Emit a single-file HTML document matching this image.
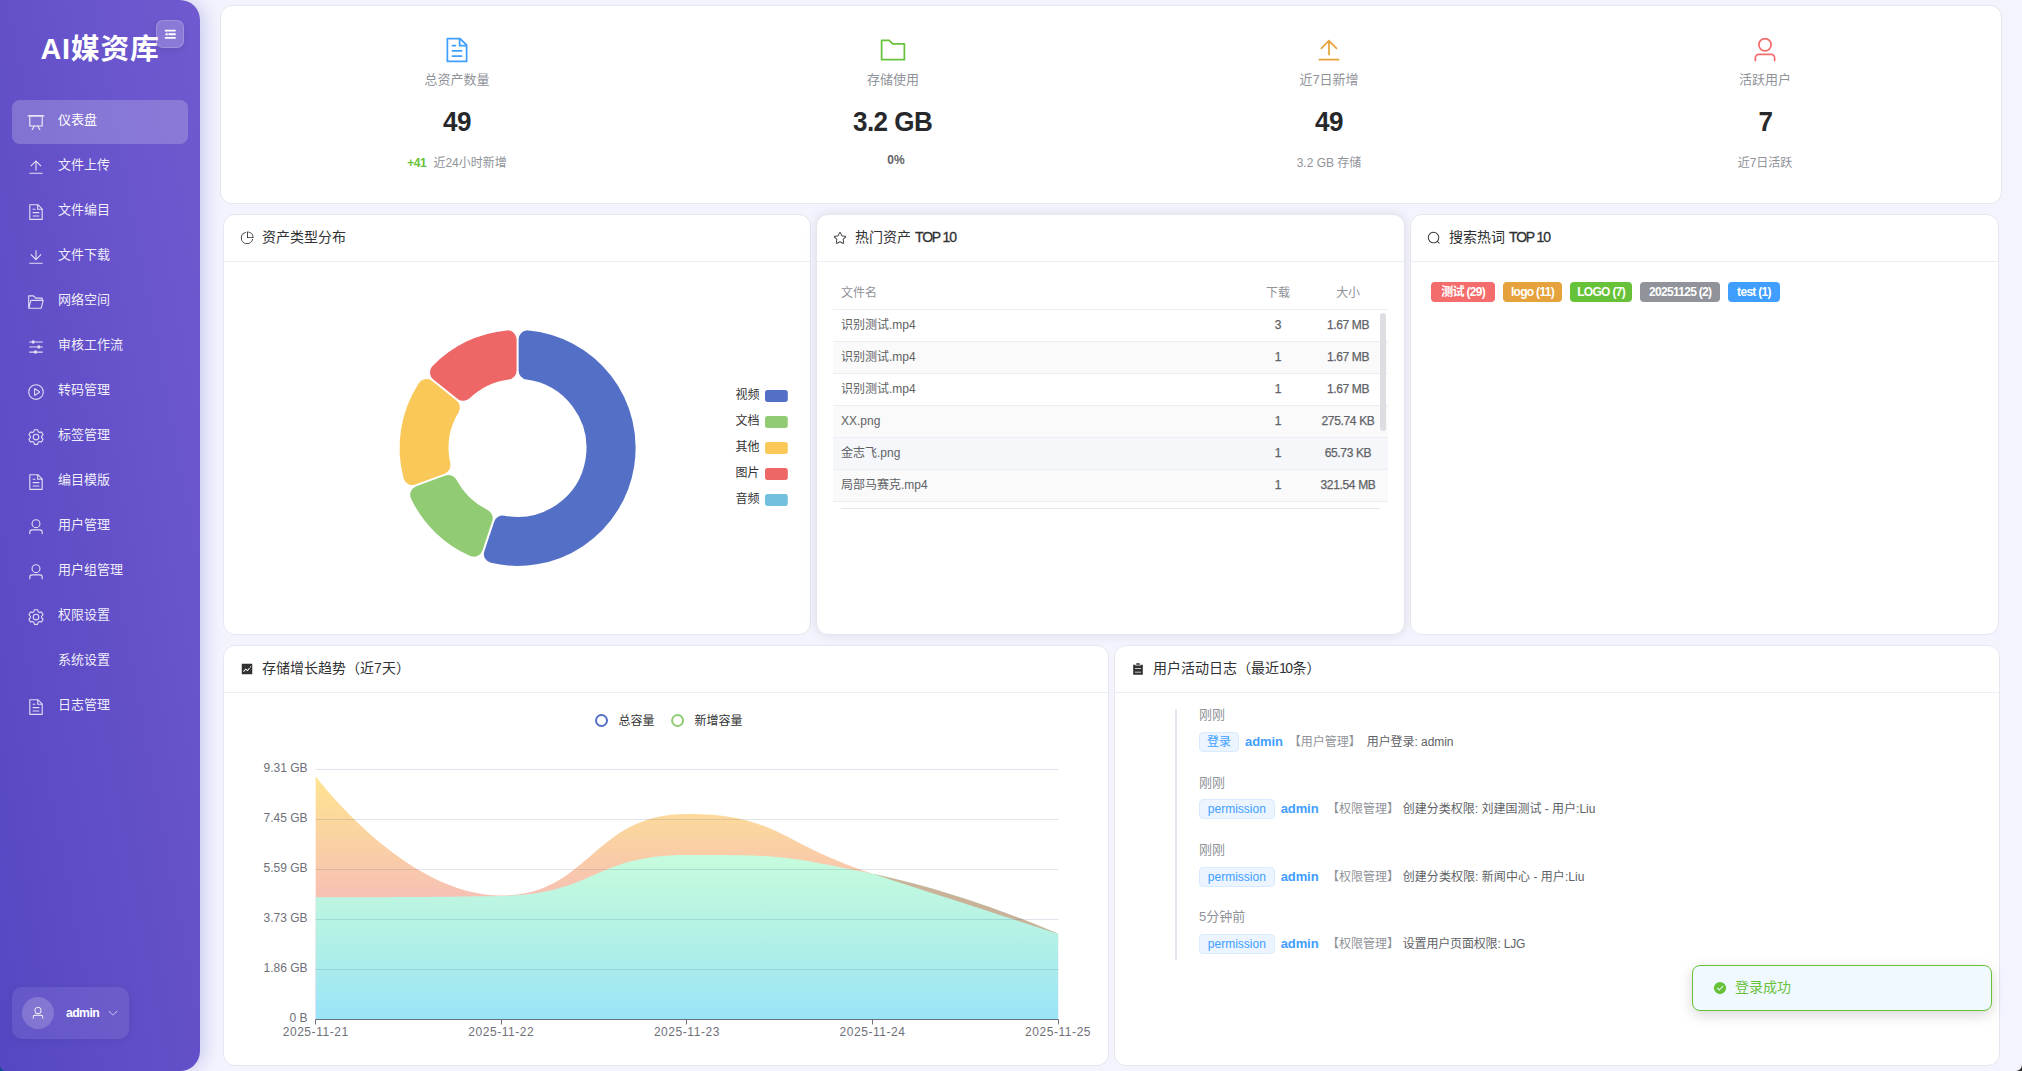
<!DOCTYPE html>
<html lang="zh-CN"><head><meta charset="utf-8"><title>AI媒资库</title>
<style>
*{box-sizing:border-box;margin:0;padding:0}
html,body{width:2022px;height:1071px;overflow:hidden}
body{background:#f3f4fd;font-family:"Liberation Sans","Noto Sans CJK SC",sans-serif;color:#303133;position:relative;font-size:14px;line-height:1}
.abs{position:absolute}
svg.ic{display:block;flex:none}
/* sidebar */
.side{position:absolute;left:0;top:0;width:200px;height:1071px;border-radius:0 20px 20px 0;background:linear-gradient(to bottom left,#715ad0 0%,#5547c2 100%);box-shadow:4px 0 18px rgba(90,88,205,.27);color:#fff}
.logo{position:absolute;left:0;top:31.2px;width:200px;text-align:center;font-size:28.8px;font-weight:700;letter-spacing:.8px;line-height:36px;white-space:nowrap}
.tog{position:absolute;left:156px;top:20px;width:28px;height:28px;border-radius:7px;background:rgba(255,255,255,.2);border:1px solid rgba(255,255,255,.18);display:flex;align-items:center;justify-content:center;box-shadow:0 2px 6px rgba(0,0,0,.1)}
.mi{position:absolute;left:12px;width:176px;height:44px;border-radius:8px;display:flex;align-items:center;font-size:13px;color:rgba(255,255,255,.92)}
.mi.on{background:rgba(255,255,255,.2);color:#fff}
.mi svg{position:absolute;left:15px;top:13px;opacity:.88}
.mi span{position:absolute;left:46px;top:0;line-height:40.8px;white-space:nowrap}
.usr{position:absolute;left:12px;top:987px;width:117px;height:52px;border-radius:10px;background:rgba(255,255,255,.085);box-shadow:0 2px 8px rgba(0,0,0,.06)}
.usr .av{position:absolute;left:10px;top:10px;width:32px;height:32px;border-radius:50%;background:rgba(255,255,255,.18);display:flex;align-items:center;justify-content:center}
.usr b{position:absolute;left:54px;top:0;line-height:53.4px;font-size:12.2px;font-weight:700;letter-spacing:-.55px}
.usr .ar{position:absolute;left:95px;top:20px;opacity:.75}
/* cards */
.card{position:absolute;background:#fff;border:1px solid #e4e7ed;border-radius:12px;overflow:hidden}
.hd{position:absolute;left:0;top:0;right:0;height:47px;border-bottom:1px solid #ebeef5;display:flex;align-items:center;padding-left:16px;padding-bottom:3px;font-size:14px;color:#303133;white-space:nowrap}
.hd svg{margin-right:8.1px;margin-top:2px}
/* stats */
.st{position:absolute;top:0;width:436px;height:197px;text-align:center}
.st svg{position:absolute;left:204px;top:30px}
.st .lb{position:absolute;left:0;right:0;top:63.7px;line-height:20px;font-size:13px;color:#909399}
.st .vl{position:absolute;left:0;right:0;top:97px;line-height:38px;font-size:28px;font-weight:700;color:#27282c;letter-spacing:-.6px}
.st .vl span{display:inline-block;transform:scaleX(.93)}
.st .sb{position:absolute;left:0;right:0;top:147px;line-height:20px;font-size:12px;color:#909399}
.st .sb b{color:#67c23a;font-weight:700;margin-right:7px;letter-spacing:-.4px}
/* table */
.tbl{position:absolute;left:16px;top:63px;width:554.5px;font-size:12px;color:#606266}
.tr{position:relative;height:32px;border-bottom:1px solid #ebeef5;line-height:31px;white-space:nowrap}
.tr.h{color:#909399}
.tr.h span{-webkit-text-stroke:0}
.tr.s{background:#fafafa}
.tr.hv{background:#f5f7fa}
.tr span{position:absolute;top:0}
.c1{left:8px}
.c2{left:410px;width:70px;text-align:center;-webkit-text-stroke:.25px currentColor}
.c3{left:475px;width:80px;text-align:center;letter-spacing:-.35px;-webkit-text-stroke:.25px currentColor}
/* tags */
.tg{position:absolute;top:67px;height:20px;border-radius:4px;color:#fff;font-size:12px;font-weight:700;line-height:20px;text-align:center;white-space:nowrap;letter-spacing:-.7px}
/* timeline */
.tl{position:absolute;left:60.3px;width:2px;background:#e4e7ed}
.ts{position:absolute;left:84px;font-size:13px;color:#909399;line-height:18px;white-space:nowrap}
.row{position:absolute;left:84px;height:20px;display:flex;align-items:center;font-size:12px;color:#606266;white-space:nowrap;line-height:20px}
.lt{height:20px;border:1px solid #d9ecff;background:#ecf5ff;color:#409eff;border-radius:4px;padding:0;flex:none;line-height:18px;font-size:12px;text-align:center}
.row b{color:#409eff;font-size:13px;font-weight:700;margin-left:6px;letter-spacing:-.1px}
.row i{font-style:normal;color:#909399;margin-left:5px}
.row em{font-style:normal;margin-left:5px;letter-spacing:-.2px}
/* toast */
.toast{position:absolute;left:1692px;top:965px;width:300px;height:46px;border:1px solid #67c23a;border-radius:8px;background:#f0f9ff;box-shadow:0 4px 14px rgba(0,0,0,.16);color:#67c23a;font-size:14px}
.toast svg{position:absolute;left:20.3px;top:15px}
.toast span{position:absolute;left:42px;top:0;line-height:42px}
svg text{font-family:"Liberation Sans","Noto Sans CJK SC",sans-serif}
</style></head><body>
<div class="side"><div class="logo">AI媒资库</div><div class="tog"><svg class="ic" viewBox="0 0 1024 1024" width="14.5" height="14.5" fill="currentColor" style=""><path d="M896 192H128v128h768zm0 256H384v128h512zm0 256H128v128h768zM320 384 128 512l192 128z"/></svg></div><div class="mi on" style="top:100px"><svg class="ic" viewBox="0 0 1024 1024" width="18" height="18" fill="currentColor" style=""><path d="M32 128h960v64H32z"/><path d="M192 192v512h640V192zm-64-64h768v608a32 32 0 0 1-32 32H160a32 32 0 0 1-32-32z"/><path d="M322.176 960H248.32l144.64-250.56 55.424 32zm453.888 0h-73.856L576 741.44l55.424-32z"/></svg><span>仪表盘</span></div><div class="mi" style="top:145px"><svg class="ic" viewBox="0 0 1024 1024" width="18" height="18" fill="currentColor" style=""><path d="M160 832h704a32 32 0 1 1 0 64H160a32 32 0 1 1 0-64m384-578.304V704h-64V247.296L237.248 490.048 192 444.8 508.8 128l316.8 316.8-45.312 45.248z"/></svg><span>文件上传</span></div><div class="mi" style="top:190px"><svg class="ic" viewBox="0 0 1024 1024" width="18" height="18" fill="currentColor" style=""><path d="M832 384H576V128H192v768h640zm-26.496-64L640 154.496V320zM160 64h480l256 256v608a32 32 0 0 1-32 32H160a32 32 0 0 1-32-32V96a32 32 0 0 1 32-32m160 448h384v64H320zm0-192h160v64H320zm0 384h384v64H320z"/></svg><span>文件编目</span></div><div class="mi" style="top:235px"><svg class="ic" viewBox="0 0 1024 1024" width="18" height="18" fill="currentColor" style=""><path d="M160 832h704a32 32 0 1 1 0 64H160a32 32 0 1 1 0-64m384-253.696 236.288-236.352 45.248 45.248L508.8 704 192 387.2l45.248-45.248L480 584.704V128h64z"/></svg><span>文件下载</span></div><div class="mi" style="top:280px"><svg class="ic" viewBox="0 0 1024 1024" width="18" height="18" fill="currentColor" style=""><path d="M878.08 448H241.92l-96 384h636.16zM832 384v-64H485.76L357.504 192H128v448l57.92-231.744A32 32 0 0 1 216.96 384zm-24.96 512H96a32 32 0 0 1-32-32V160a32 32 0 0 1 32-32h287.872l128.384 128H864a32 32 0 0 1 32 32v96h23.04a32 32 0 0 1 31.04 39.744l-112 448A32 32 0 0 1 807.04 896"/></svg><span>网络空间</span></div><div class="mi" style="top:325px"><svg class="ic" viewBox="0 0 1024 1024" width="18" height="18" fill="currentColor" style=""><path d="M389.44 768a96.064 96.064 0 0 1 181.12 0H896v64H570.56a96.064 96.064 0 0 1-181.12 0H128v-64zm192-288a96.064 96.064 0 0 1 181.12 0H896v64H762.56a96.064 96.064 0 0 1-181.12 0H128v-64zm-320-288a96.064 96.064 0 0 1 181.12 0H896v64H442.56a96.064 96.064 0 0 1-181.12 0H128v-64z"/></svg><span>审核工作流</span></div><div class="mi" style="top:370px"><svg class="ic" viewBox="0 0 1024 1024" width="18" height="18" fill="currentColor" style=""><path d="M512 64a448 448 0 1 1 0 896 448 448 0 0 1 0-896m0 832a384 384 0 0 0 0-768 384 384 0 0 0 0 768m-48-247.616L668.608 512 464 375.616zm10.624-342.656 249.472 166.336a48 48 0 0 1 0 79.872L474.624 718.272A48 48 0 0 1 400 678.336V345.6a48 48 0 0 1 74.624-39.936z"/></svg><span>转码管理</span></div><div class="mi" style="top:415px"><svg class="ic" viewBox="0 0 1024 1024" width="18" height="18" fill="currentColor" style=""><path d="M600.704 64a32 32 0 0 1 30.464 22.208l35.2 109.376c14.784 7.232 28.928 15.36 42.432 24.512l112.384-24.192a32 32 0 0 1 34.432 15.36L944.32 364.8a32 32 0 0 1-4.032 37.504l-77.12 85.12a357.12 357.12 0 0 1 0 49.024l77.12 85.248a32 32 0 0 1 4.032 37.504l-88.704 153.6a32 32 0 0 1-34.432 15.296L708.8 803.904c-13.44 9.088-27.648 17.28-42.368 24.512l-35.264 109.376A32 32 0 0 1 600.704 960H423.296a32 32 0 0 1-30.464-22.208L357.696 828.48a351.616 351.616 0 0 1-42.56-24.64l-112.32 24.256a32 32 0 0 1-34.432-15.36L79.68 659.2a32 32 0 0 1 4.032-37.504l77.12-85.248a357.12 357.12 0 0 1 0-48.896l-77.12-85.248A32 32 0 0 1 79.68 364.8l88.704-153.6a32 32 0 0 1 34.432-15.296l112.32 24.256c13.568-9.152 27.776-17.408 42.56-24.64l35.2-109.312A32 32 0 0 1 423.232 64H600.64zm-23.424 64H446.72l-36.352 113.088-24.512 11.968a294.113 294.113 0 0 0-34.816 20.096l-22.656 15.36-116.224-25.088-65.28 113.152 79.68 88.192-1.92 27.136a293.12 293.12 0 0 0 0 40.192l1.92 27.136-79.808 88.192 65.344 113.152 116.224-25.024 22.656 15.296a294.113 294.113 0 0 0 34.816 20.096l24.512 11.968L446.72 896h130.688l36.48-113.152 24.448-11.904a288.282 288.282 0 0 0 34.752-20.096l22.592-15.296 116.288 25.024 65.28-113.152-79.744-88.192 1.92-27.136a293.12 293.12 0 0 0 0-40.256l-1.92-27.136 79.808-88.128-65.344-113.152-116.288 24.96-22.592-15.232a287.616 287.616 0 0 0-34.752-20.096l-24.448-11.904L577.344 128zM512 320a192 192 0 1 1 0 384 192 192 0 0 1 0-384m0 64a128 128 0 1 0 0 256 128 128 0 0 0 0-256"/></svg><span>标签管理</span></div><div class="mi" style="top:460px"><svg class="ic" viewBox="0 0 1024 1024" width="18" height="18" fill="currentColor" style=""><path d="M832 384H576V128H192v768h640zm-26.496-64L640 154.496V320zM160 64h480l256 256v608a32 32 0 0 1-32 32H160a32 32 0 0 1-32-32V96a32 32 0 0 1 32-32m160 448h384v64H320zm0-192h160v64H320zm0 384h384v64H320z"/></svg><span>编目模版</span></div><div class="mi" style="top:505px"><svg class="ic" viewBox="0 0 1024 1024" width="18" height="18" fill="currentColor" style=""><path d="M512 512a192 192 0 1 0 0-384 192 192 0 0 0 0 384m0 64a256 256 0 1 1 0-512 256 256 0 0 1 0 512m320 320v-96a96 96 0 0 0-96-96H288a96 96 0 0 0-96 96v96a32 32 0 1 1-64 0v-96a160 160 0 0 1 160-160h448a160 160 0 0 1 160 160v96a32 32 0 1 1-64 0"/></svg><span>用户管理</span></div><div class="mi" style="top:550px"><svg class="ic" viewBox="0 0 1024 1024" width="18" height="18" fill="currentColor" style=""><path d="M512 512a192 192 0 1 0 0-384 192 192 0 0 0 0 384m0 64a256 256 0 1 1 0-512 256 256 0 0 1 0 512m320 320v-96a96 96 0 0 0-96-96H288a96 96 0 0 0-96 96v96a32 32 0 1 1-64 0v-96a160 160 0 0 1 160-160h448a160 160 0 0 1 160 160v96a32 32 0 1 1-64 0"/></svg><span>用户组管理</span></div><div class="mi" style="top:595px"><svg class="ic" viewBox="0 0 1024 1024" width="18" height="18" fill="currentColor" style=""><path d="M600.704 64a32 32 0 0 1 30.464 22.208l35.2 109.376c14.784 7.232 28.928 15.36 42.432 24.512l112.384-24.192a32 32 0 0 1 34.432 15.36L944.32 364.8a32 32 0 0 1-4.032 37.504l-77.12 85.12a357.12 357.12 0 0 1 0 49.024l77.12 85.248a32 32 0 0 1 4.032 37.504l-88.704 153.6a32 32 0 0 1-34.432 15.296L708.8 803.904c-13.44 9.088-27.648 17.28-42.368 24.512l-35.264 109.376A32 32 0 0 1 600.704 960H423.296a32 32 0 0 1-30.464-22.208L357.696 828.48a351.616 351.616 0 0 1-42.56-24.64l-112.32 24.256a32 32 0 0 1-34.432-15.36L79.68 659.2a32 32 0 0 1 4.032-37.504l77.12-85.248a357.12 357.12 0 0 1 0-48.896l-77.12-85.248A32 32 0 0 1 79.68 364.8l88.704-153.6a32 32 0 0 1 34.432-15.296l112.32 24.256c13.568-9.152 27.776-17.408 42.56-24.64l35.2-109.312A32 32 0 0 1 423.232 64H600.64zm-23.424 64H446.72l-36.352 113.088-24.512 11.968a294.113 294.113 0 0 0-34.816 20.096l-22.656 15.36-116.224-25.088-65.28 113.152 79.68 88.192-1.92 27.136a293.12 293.12 0 0 0 0 40.192l1.92 27.136-79.808 88.192 65.344 113.152 116.224-25.024 22.656 15.296a294.113 294.113 0 0 0 34.816 20.096l24.512 11.968L446.72 896h130.688l36.48-113.152 24.448-11.904a288.282 288.282 0 0 0 34.752-20.096l22.592-15.296 116.288 25.024 65.28-113.152-79.744-88.192 1.92-27.136a293.12 293.12 0 0 0 0-40.256l-1.92-27.136 79.808-88.128-65.344-113.152-116.288 24.96-22.592-15.232a287.616 287.616 0 0 0-34.752-20.096l-24.448-11.904L577.344 128zM512 320a192 192 0 1 1 0 384 192 192 0 0 1 0-384m0 64a128 128 0 1 0 0 256 128 128 0 0 0 0-256"/></svg><span>权限设置</span></div><div class="mi" style="top:640px"><span>系统设置</span></div><div class="mi" style="top:685px"><svg class="ic" viewBox="0 0 1024 1024" width="18" height="18" fill="currentColor" style=""><path d="M832 384H576V128H192v768h640zm-26.496-64L640 154.496V320zM160 64h480l256 256v608a32 32 0 0 1-32 32H160a32 32 0 0 1-32-32V96a32 32 0 0 1 32-32m160 448h384v64H320zm0-192h160v64H320zm0 384h384v64H320z"/></svg><span>日志管理</span></div><div class="usr"><div class="av"><svg class="ic" viewBox="0 0 1024 1024" width="14" height="14" fill="currentColor" style=""><path d="M512 512a192 192 0 1 0 0-384 192 192 0 0 0 0 384m0 64a256 256 0 1 1 0-512 256 256 0 0 1 0 512m320 320v-96a96 96 0 0 0-96-96H288a96 96 0 0 0-96 96v96a32 32 0 1 1-64 0v-96a160 160 0 0 1 160-160h448a160 160 0 0 1 160 160v96a32 32 0 1 1-64 0"/></svg></div><b>admin</b><svg class="ic ar" viewBox="0 0 1024 1024" width="12" height="12" fill="currentColor" style=""><path d="M831.872 340.864 512 652.672 192.128 340.864a30.592 30.592 0 0 0-42.752 0 29.12 29.12 0 0 0 0 41.6L489.664 714.24a32 32 0 0 0 44.672 0l340.288-331.712a29.12 29.12 0 0 0 0-41.728 30.592 30.592 0 0 0-42.752 0z"/></svg></div></div>
<div class="card" style="left:220px;top:5px;width:1782px;height:199px"><div class="st" style="left:18px"><svg class="ic" viewBox="0 0 1024 1024" width="28" height="28" fill="currentColor" style="color:#409eff"><path d="M832 384H576V128H192v768h640zm-26.496-64L640 154.496V320zM160 64h480l256 256v608a32 32 0 0 1-32 32H160a32 32 0 0 1-32-32V96a32 32 0 0 1 32-32m160 448h384v64H320zm0-192h160v64H320zm0 384h384v64H320z"/></svg><div class="lb">总资产数量</div><div class="vl"><span>49</span></div><div class="sb"><b>+41</b>近24小时新增</div></div><div class="st" style="left:454px"><svg class="ic" viewBox="0 0 1024 1024" width="28" height="28" fill="currentColor" style="color:#67c23a"><path d="M128 192v640h768V320H485.76L357.504 192zm-32-64h287.872l128.384 128H928a32 32 0 0 1 32 32v576a32 32 0 0 1-32 32H96a32 32 0 0 1-32-32V160a32 32 0 0 1 32-32"/></svg><div class="lb">存储使用</div><div class="vl"><span>3.2 GB</span></div><div class="sb"><span style="color:#606266;font-weight:700;position:relative;top:-3px;left:3px">0%</span></div></div><div class="st" style="left:890px"><svg class="ic" viewBox="0 0 1024 1024" width="28" height="28" fill="currentColor" style="color:#e6a23c"><path d="M160 832h704a32 32 0 1 1 0 64H160a32 32 0 1 1 0-64m384-578.304V704h-64V247.296L237.248 490.048 192 444.8 508.8 128l316.8 316.8-45.312 45.248z"/></svg><div class="lb">近7日新增</div><div class="vl"><span>49</span></div><div class="sb">3.2 GB 存储</div></div><div class="st" style="left:1326px"><svg class="ic" viewBox="0 0 1024 1024" width="28" height="28" fill="currentColor" style="color:#f56c6c"><path d="M512 512a192 192 0 1 0 0-384 192 192 0 0 0 0 384m0 64a256 256 0 1 1 0-512 256 256 0 0 1 0 512m320 320v-96a96 96 0 0 0-96-96H288a96 96 0 0 0-96 96v96a32 32 0 1 1-64 0v-96a160 160 0 0 1 160-160h448a160 160 0 0 1 160 160v96a32 32 0 1 1-64 0"/></svg><div class="lb">活跃用户</div><div class="vl"><span>7</span></div><div class="sb">近7日活跃</div></div></div>
<div class="card" style="left:223px;top:214px;width:588px;height:421px"><div class="hd"><svg class="ic" viewBox="0 0 1024 1024" width="14" height="14" fill="currentColor" style=""><path d="M448 68.48v64.832A384.128 384.128 0 0 0 512 896a384.128 384.128 0 0 0 378.688-320h64.768A448.128 448.128 0 0 1 64 512 448.128 448.128 0 0 1 448 68.48"/><path d="M576 97.28V448h350.72A384.064 384.064 0 0 0 576 97.28M512 64V33.152A448 448 0 0 1 990.848 512H512z"/></svg>资产类型分布</div></div>
<div class="card" style="left:816px;top:214px;width:589px;height:421px;box-shadow:0 0 12px rgba(0,0,0,.10)"><div class="hd"><svg class="ic" viewBox="0 0 1024 1024" width="14" height="14" fill="currentColor" style=""><path d="m512 747.84 228.16 119.936a6.4 6.4 0 0 0 9.28-6.72l-43.52-254.08 184.512-179.904a6.4 6.4 0 0 0-3.52-10.88l-255.104-37.12L517.76 147.904a6.4 6.4 0 0 0-11.52 0L392.192 379.072l-255.104 37.12a6.4 6.4 0 0 0-3.52 10.88L318.08 606.976l-43.584 254.08a6.4 6.4 0 0 0 9.28 6.72zM313.6 924.48a70.4 70.4 0 0 1-102.144-74.24l37.888-220.928L88.96 472.96A70.4 70.4 0 0 1 128 352.896l221.76-32.256 99.2-200.96a70.4 70.4 0 0 1 126.208 0l99.2 200.96 221.824 32.256a70.4 70.4 0 0 1 39.04 120.064L774.72 629.376l37.888 220.928a70.4 70.4 0 0 1-102.144 74.24L512 820.096l-198.4 104.32z"/></svg><span>热门资产 <span style="letter-spacing:-1.15px;-webkit-text-stroke:.3px currentColor">TOP 10</span></span></div><div class="tbl"><div class="tr h"><span class="c1">文件名</span><span class="c2">下载</span><span class="c3">大小</span></div><div class="tr "><span class="c1">识别测试.mp4</span><span class="c2">3</span><span class="c3">1.67 MB</span></div><div class="tr s"><span class="c1">识别测试.mp4</span><span class="c2">1</span><span class="c3">1.67 MB</span></div><div class="tr "><span class="c1">识别测试.mp4</span><span class="c2">1</span><span class="c3">1.67 MB</span></div><div class="tr s"><span class="c1">XX.png</span><span class="c2">1</span><span class="c3">275.74 KB</span></div><div class="tr hv"><span class="c1">金志飞.png</span><span class="c2">1</span><span class="c3">65.73 KB</span></div><div class="tr s"><span class="c1">局部马赛克.mp4</span><span class="c2">1</span><span class="c3">321.54 MB</span></div></div><div class="abs" style="left:563px;top:98px;width:6px;height:118px;border-radius:3px;background:#dddee1"></div><div class="abs" style="left:24px;top:293px;width:539px;height:1px;background:#e6e8ee"></div></div>
<div class="card" style="left:1410px;top:214px;width:589px;height:421px"><div class="hd"><svg class="ic" viewBox="0 0 1024 1024" width="14" height="14" fill="currentColor" style=""><path d="m795.904 750.72 124.992 124.928a32 32 0 0 1-45.248 45.248L750.656 795.904a416 416 0 1 1 45.248-45.248zM480 832a352 352 0 1 0 0-704 352 352 0 0 0 0 704"/></svg><span>搜索热词 <span style="letter-spacing:-1.15px;-webkit-text-stroke:.3px currentColor">TOP 10</span></span></div><div class="tg" style="left:20.0px;width:64.3px;background:#f56c6c">测试 (29)</div><div class="tg" style="left:92.2px;width:58.6px;background:#e6a23c">logo (11)</div><div class="tg" style="left:159.2px;width:61.8px;background:#67c23a">LOGO (7)</div><div class="tg" style="left:229.2px;width:80px;background:#909399">20251125 (2)</div><div class="tg" style="left:317.1px;width:51.8px;background:#409eff">test (1)</div></div>
<div class="card" style="left:223px;top:645px;width:886px;height:421px"><div class="hd"><svg class="ic" viewBox="0 0 1024 1024" width="14" height="14" fill="currentColor" style=""><path d="M128 896V128h768v768zm291.712-327.296 128 102.4 180.16-201.792-47.744-42.624-139.84 156.608-128-102.4-180.16 201.792 47.744 42.624 139.84-156.608zM816 352a48 48 0 1 0-96 0 48 48 0 0 0 96 0"/></svg>存储增长趋势（近7天）</div></div>
<div class="card" style="left:1114px;top:645px;width:886px;height:421px"><div class="hd"><svg class="ic" viewBox="0 0 1024 1024" width="14" height="14" fill="currentColor" style=""><path d="M704 192h160v736H160V192h160v64h384zM288 512h448v-64H288zm0 256h448v-64H288zm96-576V96h256v96z"/></svg>用户活动日志（最近<span style="letter-spacing:-1.6px;margin-right:1px">10</span>条）</div><div class="tl" style="top:63px;height:251px"></div><div class="ts" style="top:60.3px">刚刚</div><div class="row" style="top:85.9px"><span class="lt" style="width:40.1px">登录</span><b>admin</b><i style="margin-left:5.9px">【用户管理】</i><em style="margin-left:5.9px;letter-spacing:-0.05px">用户登录: admin</em></div><div class="ts" style="top:128.4px">刚刚</div><div class="row" style="top:153.1px"><span class="lt" style="width:75.7px">permission</span><b>admin</b><i style="margin-left:8.6px">【权限管理】</i><em style="margin-left:3.65px;letter-spacing:0px">创建分类权限: 刘建国测试 - 用户:Liu</em></div><div class="ts" style="top:195.2px">刚刚</div><div class="row" style="top:220.8px"><span class="lt" style="width:75.7px">permission</span><b>admin</b><i style="margin-left:8.6px">【权限管理】</i><em style="margin-left:3.65px;letter-spacing:0.05px">创建分类权限: 新闻中心 - 用户:Liu</em></div><div class="ts" style="top:262.4px">5分钟前</div><div class="row" style="top:288.0px"><span class="lt" style="width:75.7px">permission</span><b>admin</b><i style="margin-left:8.6px">【权限管理】</i><em style="margin-left:3.65px;letter-spacing:-0.17px">设置用户页面权限: LJG</em></div></div>
<div class="toast"><svg class="ic" viewBox="0 0 1024 1024" width="14" height="14" fill="currentColor" style=""><path d="M512 64a448 448 0 1 1 0 896 448 448 0 0 1 0-896m-55.808 536.384-99.52-99.584a38.4 38.4 0 1 0-54.336 54.336l126.72 126.72a38.4 38.4 0 0 0 54.336 0l262.4-262.464a38.4 38.4 0 1 0-54.272-54.336z"/></svg><span>登录成功</span></div>
<svg class="abs" style="left:0;top:0;pointer-events:none" width="2022" height="1071" viewBox="0 0 2022 1071"><defs><linearGradient id="g1" x1="0" y1="0" x2="0" y2="1"><stop offset="0" stop-color="#ffe38a"/><stop offset=".5" stop-color="#f6bdb0"/><stop offset="1" stop-color="#ee9cd2"/></linearGradient><linearGradient id="g2" x1="0" y1="0" x2="0" y2="1"><stop offset="0" stop-color="#c6fbdd"/><stop offset=".5" stop-color="#b3f1e6"/><stop offset="1" stop-color="#9ae4f8"/></linearGradient></defs><path d="M527.60,339.36 A109.00,109.00 0 1 1 492.89,554.06 L502.71,524.47 A78.00,78.00 0 1 0 527.60,370.54 Z" fill="#5470c6" stroke="#5470c6" stroke-width="18.0" stroke-linejoin="round"/><path d="M473.91,547.76 A109.00,109.00 0 0 1 419.19,494.77 L448.46,484.00 A78.00,78.00 0 0 0 483.73,518.16 Z" fill="#91cc75" stroke="#91cc75" stroke-width="18.0" stroke-linejoin="round"/><path d="M412.28,476.00 A109.00,109.00 0 0 1 426.50,388.04 L450.89,407.49 A78.00,78.00 0 0 0 441.55,465.23 Z" fill="#fac858" stroke="#fac858" stroke-width="18.0" stroke-linejoin="round"/><path d="M438.97,372.41 A109.00,109.00 0 0 1 507.60,339.36 L507.60,370.54 A78.00,78.00 0 0 0 463.36,391.85 Z" fill="#ee6666" stroke="#ee6666" stroke-width="18.0" stroke-linejoin="round"/><rect x="765" y="389.9" width="22.8" height="12" rx="2.6" fill="#5470c6"/><text x="759.5" y="399.2" font-size="12" fill="#333" text-anchor="end">视频</text><rect x="765" y="415.9" width="22.8" height="12" rx="2.6" fill="#91cc75"/><text x="759.5" y="425.2" font-size="12" fill="#333" text-anchor="end">文档</text><rect x="765" y="441.9" width="22.8" height="12" rx="2.6" fill="#fac858"/><text x="759.5" y="451.2" font-size="12" fill="#333" text-anchor="end">其他</text><rect x="765" y="467.9" width="22.8" height="12" rx="2.6" fill="#ee6666"/><text x="759.5" y="477.2" font-size="12" fill="#333" text-anchor="end">图片</text><rect x="765" y="493.9" width="22.8" height="12" rx="2.6" fill="#73c0de"/><text x="759.5" y="503.2" font-size="12" fill="#333" text-anchor="end">音频</text><text x="307.5" y="772.0" font-size="12" fill="#6e7079" text-anchor="end">9.31 GB</text><text x="307.5" y="822.0" font-size="12" fill="#6e7079" text-anchor="end">7.45 GB</text><text x="307.5" y="872.0" font-size="12" fill="#6e7079" text-anchor="end">5.59 GB</text><text x="307.5" y="922.0" font-size="12" fill="#6e7079" text-anchor="end">3.73 GB</text><text x="307.5" y="972.0" font-size="12" fill="#6e7079" text-anchor="end">1.86 GB</text><text x="307.5" y="1022.0" font-size="12" fill="#6e7079" text-anchor="end">0 B</text><path d="M315.70,776.20 C315.70,776.20 404.57,895.50 501.30,895.50 C590.17,895.50 592.29,814.00 686.90,814.00 C777.89,814.00 779.73,843.76 872.50,873.70 C965.33,903.66 1058.10,933.80 1058.10,933.80 L1058.10,1019.5 L315.70,1019.5 Z" fill="url(#g1)" opacity=".95"/><path d="M315.70,897.30 C315.70,897.30 409.60,897.30 501.30,895.90 C595.20,894.47 593.23,855.00 686.90,855.00 C778.83,855.00 781.78,855.00 872.50,873.70 C967.38,893.26 1058.10,933.80 1058.10,933.80 L1058.10,1019.5 L315.70,1019.5 Z" fill="url(#g2)"/><path d="M872.50,873.7 C967.38,893.26 1058.10,933.80 1058.10,933.80 C1058.10,933.80 965.33,903.66 872.50,873.7 Z" fill="#cbab90" opacity=".9"/><line x1="315.5" x2="1058.5" y1="769.5" y2="769.5" stroke="rgba(50,72,125,.15)" stroke-width="1"/><line x1="315.5" x2="1058.5" y1="819.5" y2="819.5" stroke="rgba(50,72,125,.15)" stroke-width="1"/><line x1="315.5" x2="1058.5" y1="869.5" y2="869.5" stroke="rgba(50,72,125,.15)" stroke-width="1"/><line x1="315.5" x2="1058.5" y1="919.5" y2="919.5" stroke="rgba(50,72,125,.15)" stroke-width="1"/><line x1="315.5" x2="1058.5" y1="969.5" y2="969.5" stroke="rgba(50,72,125,.15)" stroke-width="1"/><line x1="315.5" x2="1058.5" y1="1019.5" y2="1019.5" stroke="#6e7079" stroke-width="1"/><line x1="315.5" x2="315.5" y1="1019.5" y2="1024.5" stroke="#6e7079" stroke-width="1"/><text x="315.7" y="1036" font-size="12" fill="#6e7079" text-anchor="middle" letter-spacing=".55">2025-11-21</text><line x1="501.5" x2="501.5" y1="1019.5" y2="1024.5" stroke="#6e7079" stroke-width="1"/><text x="501.3" y="1036" font-size="12" fill="#6e7079" text-anchor="middle" letter-spacing=".55">2025-11-22</text><line x1="686.5" x2="686.5" y1="1019.5" y2="1024.5" stroke="#6e7079" stroke-width="1"/><text x="686.9" y="1036" font-size="12" fill="#6e7079" text-anchor="middle" letter-spacing=".55">2025-11-23</text><line x1="872.5" x2="872.5" y1="1019.5" y2="1024.5" stroke="#6e7079" stroke-width="1"/><text x="872.5" y="1036" font-size="12" fill="#6e7079" text-anchor="middle" letter-spacing=".55">2025-11-24</text><line x1="1058.5" x2="1058.5" y1="1019.5" y2="1024.5" stroke="#6e7079" stroke-width="1"/><text x="1058.1" y="1036" font-size="12" fill="#6e7079" text-anchor="middle" letter-spacing=".55">2025-11-25</text><circle cx="601.5" cy="720.5" r="5.5" fill="#fff" stroke="#5470c6" stroke-width="2"/><text x="618.5" y="724.5" font-size="12" fill="#333">总容量</text><circle cx="677.6" cy="720.5" r="5.5" fill="#fff" stroke="#91cc75" stroke-width="2"/><text x="694.5" y="724.5" font-size="12" fill="#333">新增容量</text></svg>
<div class="abs" style="right:0;bottom:0;width:6px;height:6px;background:radial-gradient(circle at 0 0,rgba(46,46,46,0) 5.4px,#2e2e2e 6.2px)"></div><div class="abs" style="left:0;bottom:0;width:5px;height:5px;background:radial-gradient(circle at 100% 0,rgba(0,80,143,0) 4.4px,#00508f 5.2px)"></div>
</body></html>
